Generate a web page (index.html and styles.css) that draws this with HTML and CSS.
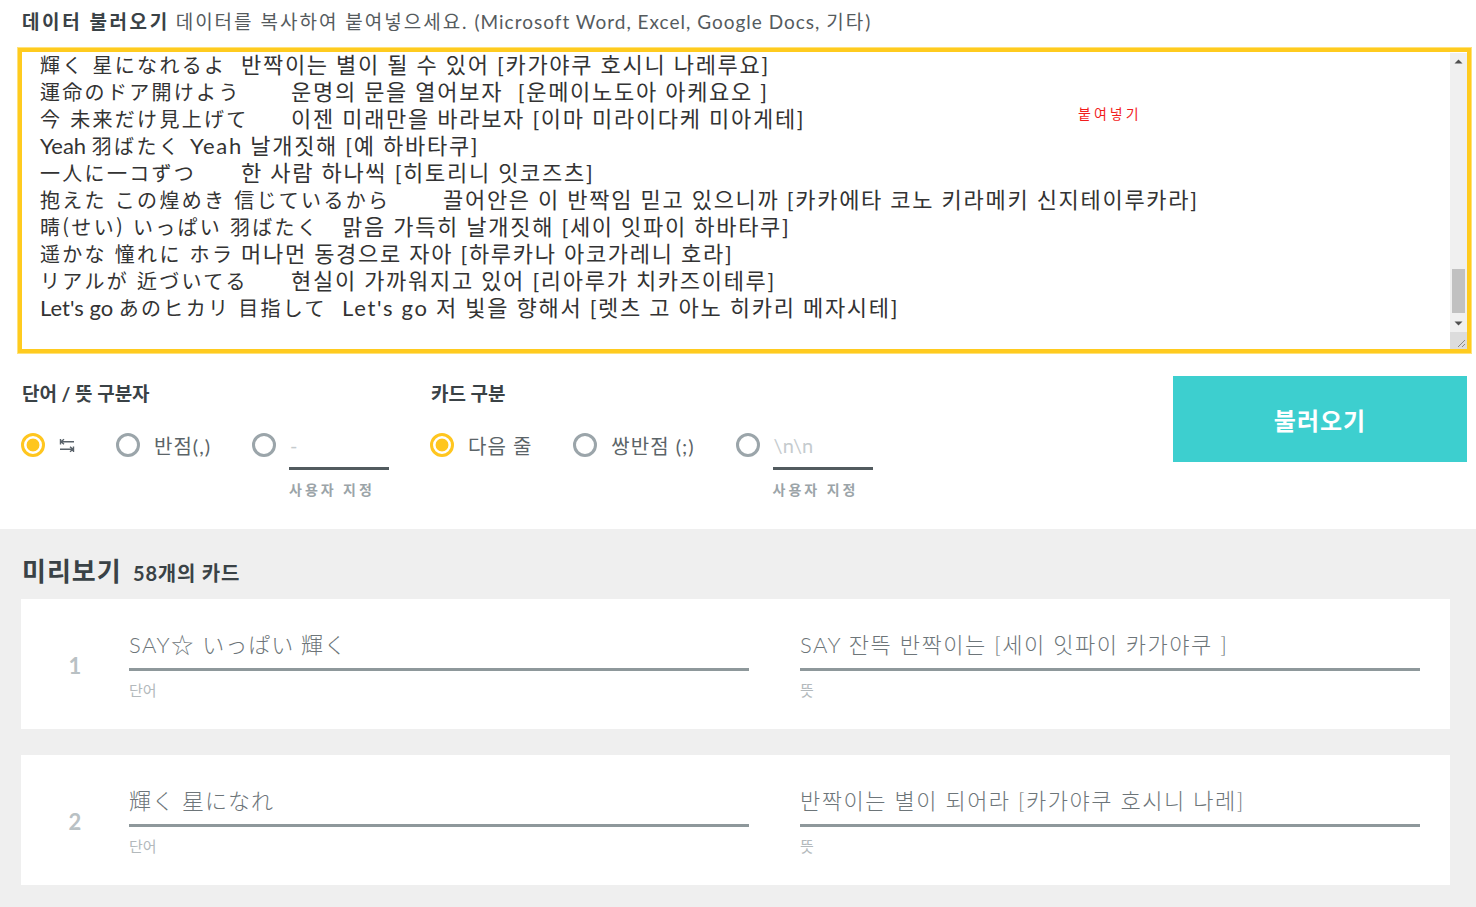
FILE: index.html
```html
<!DOCTYPE html>
<html lang="ko">
<head>
<meta charset="utf-8">
<title>데이터 불러오기</title>
<link rel="stylesheet" href="styles.css">
</head>
<body>
<section class="import">
  <p class="intro"><strong>데이터 불러오기</strong> <span class="ko">데이터를 복사하여 붙여넣으세요.</span> (Microsoft Word, Excel, Google Docs, <span class="ko">기타</span>)</p>
  <div class="paste">
    <div class="paste-text">
      <div class="paste-lines">
        <div class="ln"><span class="w t4"><span class="ja">輝く 星になれるよ</span></span>반짝이는 별이 될 수 있어 [카가야쿠 호시니 나레루요]</div>
        <div class="ln"><span class="w t5"><span class="ja">運命のドア開けよう</span></span>운명의 문을 열어보자&nbsp; [운메이노도아 아케요오 ]</div>
        <div class="ln"><span class="w t5"><span class="ja">今 未来だけ見上げて</span></span>이젠 미래만을 바라보자 [이마 미라이다케 미아게테]</div>
        <div class="ln"><span class="w t3">Yeah <span class="ja">羽ばたく</span></span>Yeah 날개짓해 [예 하바타쿠]</div>
        <div class="ln"><span class="w t4"><span class="ja">一人に一コずつ</span></span>한 사람 하나씩 [히토리니 잇코즈츠]</div>
        <div class="ln"><span class="w t8"><span class="ja">抱えた この煌めき 信じているから</span></span>끌어안은 이 반짝임 믿고 있으니까 [카카에타 코노 키라메키 신지테이루카라]</div>
        <div class="ln"><span class="w t6"><span class="ja">晴(せい) いっぱい 羽ばたく</span></span>맑음 가득히 날개짓해 [세이 잇파이 하바타쿠]</div>
        <div class="ln"><span class="w t4"><span class="ja">遥かな 憧れに ホラ</span></span>머나먼 동경으로 자아 [하루카나 아코가레니 호라]</div>
        <div class="ln"><span class="w t5"><span class="ja">リアルが 近づいてる</span></span>현실이 가까워지고 있어 [리아루가 치카즈이테루]</div>
        <div class="ln"><span class="w t6">Let's go <span class="ja">あのヒカリ 目指して</span></span>Let's go 저 빛을 향해서 [렛츠 고 아노 히카리 메자시테]</div>
      </div>
    </div>
    <span class="paste-hint">붙여넣기</span>
    <div class="scrollbar">
      <span class="sb-btn"><svg width="17" height="17" viewBox="0 0 17 17"><path d="M4.5 10.5 L8.5 6.5 L12.5 10.5 Z" fill="#505050"/></svg></span>
      <span class="sb-track"><span class="sb-thumb"></span></span>
      <span class="sb-btn"><svg width="17" height="17" viewBox="0 0 17 17"><path d="M4.5 6.5 L8.5 10.5 L12.5 6.5 Z" fill="#505050"/></svg></span>
      <span class="sb-corner"><svg width="17" height="17" viewBox="0 0 17 17"><path d="M15 8 L8 15 M15 12 L12 15" stroke="#888" stroke-width="1"/></svg></span>
    </div>
  </div>

  <div class="options">
    <div class="groups">
      <div class="group">
        <h3 class="group-title">단어 / 뜻 구분자</h3>
        <div class="choices">
          <div class="choice"><span class="radio on"></span>
            <svg class="tab-icon" width="16" height="15" viewBox="0 0 16 15"><path d="M1.5 1 V6.5 M2 3.7 H15 M2 3.7 L5 1.2 M2 3.7 L5 6.2 M14.5 8.5 V14 M1 11.2 H14 M14 11.2 L11 8.7 M14 11.2 L11 13.7" stroke="#59626a" stroke-width="1.4" fill="none"/></svg>
          </div>
          <div class="choice"><span class="radio"></span><span>반점(,)</span></div>
          <div class="choice custom"><span class="radio"></span>
            <div class="custom-field"><span class="custom-input">-</span><span class="custom-label">사용자 지정</span></div>
          </div>
        </div>
      </div>
      <div class="group">
        <h3 class="group-title">카드 구분</h3>
        <div class="choices">
          <div class="choice"><span class="radio on"></span><span>다음 줄</span></div>
          <div class="choice"><span class="radio"></span><span>쌍반점 (;)</span></div>
          <div class="choice custom"><span class="radio"></span>
            <div class="custom-field"><span class="custom-input">\n\n</span><span class="custom-label">사용자 지정</span></div>
          </div>
        </div>
      </div>
    </div>
    <button class="load" type="button">불러오기</button>
  </div>
</section>

<section class="preview">
  <h2 class="preview-title">미리보기 <small>58개의 카드</small></h2>
  <div class="cards">
    <div class="card">
      <span class="card-num">1</span>
      <div class="field"><div class="field-text">SAY☆ <span class="fja">いっぱい 輝く</span></div><div class="field-label">단어</div></div>
      <div class="field"><div class="field-text">SAY 잔뜩 반짝이는 [세이 잇파이 카가야쿠 ]</div><div class="field-label">뜻</div></div>
    </div>
    <div class="card">
      <span class="card-num">2</span>
      <div class="field"><div class="field-text"><span class="fja">輝く 星になれ</span></div><div class="field-label">단어</div></div>
      <div class="field"><div class="field-text">반짝이는 별이 되어라 [카가야쿠 호시니 나레]</div><div class="field-label">뜻</div></div>
    </div>
  </div>
</section>
</body>
</html>
```

FILE: styles.css
```css
body {
  margin: 0;
  font-family: Lato, "Noto Sans CJK KR", sans-serif;
  color: #333;
  background: #fff;
}

.import {
  padding: 10px 5px 0 18px;
}

.intro {
  margin: 0 0 0 4px;
  font-size: 19px;
  line-height: 24px;
  letter-spacing: 1px;
  color: #555b5e;
  white-space: nowrap;
}

.intro strong {
  color: #3a4246;
  font-weight: 700;
  letter-spacing: 2.6px;
}

.intro .ko {
  letter-spacing: 2px;
}

.paste {
  position: relative;
  margin-top: 14px;
  height: 305px;
  box-sizing: border-box;
  border: 4px solid #ffcb1f;
  box-shadow: 0 0 0 1px #ffe27a;
  display: flex;
}

.paste-text {
  flex: 1;
  overflow: hidden;
  padding-left: 18px;
}

.paste-lines {
  margin-top: -1px;
  font-size: 22px;
  line-height: 27px;
  letter-spacing: 1.7px;
  color: #333;
}

.ln {
  white-space: nowrap;
}

.w {
  display: inline-block;
  letter-spacing: 0;
}

.ja {
  font-family: "Noto Sans CJK JP", sans-serif;
  font-size: 20px;
  letter-spacing: 2.3px;
}

.t3 { width: 150px; }
.t4 { width: 201px; }
.t5 { width: 251px; }
.t6 { width: 302px; }
.t8 { width: 403px; }

.paste-hint {
  position: absolute;
  left: 1056px;
  top: 53px;
  font-size: 14px;
  line-height: 18px;
  letter-spacing: 3px;
  color: #f21c1c;
}

.scrollbar {
  width: 17px;
  background: #f0f0f0;
  display: flex;
  flex-direction: column;
  margin-top: 1px;
}

.sb-btn,
.sb-corner {
  display: block;
  height: 17px;
}

.sb-btn svg,
.sb-corner svg {
  display: block;
}

.sb-corner {
  background: #dcdcdc;
}

.sb-track {
  flex: 1;
  display: flex;
  flex-direction: column;
  justify-content: flex-end;
  padding-bottom: 2px;
}

.sb-thumb {
  display: block;
  height: 44px;
  margin: 0 2px;
  background: #c1c1c1;
}

.options {
  display: flex;
  justify-content: space-between;
  align-items: flex-start;
  margin-top: 23px;
  padding-left: 3px;
  height: 153px;
  box-sizing: border-box;
}

.groups {
  display: flex;
  gap: 41px;
}

.group-title {
  margin: 6px 0 0 1px;
  font-size: 19px;
  line-height: 24px;
  font-weight: 700;
  color: #3a4246;
}

.choices {
  display: flex;
  gap: 41px;
  align-items: flex-start;
  margin-top: 27px;
}

.choice {
  display: flex;
  align-items: center;
  gap: 14px;
  height: 24px;
  font-size: 20px;
  letter-spacing: 1px;
  color: #5b6468;
}

.choice.custom {
  align-items: flex-start;
  gap: 13px;
  height: auto;
}

.radio {
  display: block;
  width: 24px;
  height: 24px;
  box-sizing: border-box;
  border-radius: 50%;
  border: 3px solid #9ba5aa;
  background: #fff;
  flex: none;
}

.radio.on {
  border-color: #ffc61f;
  background: radial-gradient(circle, #ffc61f 0 6px, #fff 6.8px);
}

.tab-icon {
  display: block;
}

.custom-field {
  display: flex;
  flex-direction: column;
  width: 100px;
}

.custom-input {
  line-height: 24px;
  padding: 0 1px 10px;
  border-bottom: 3px solid #525b5f;
  color: #c5cbce;
  font-size: 20px;
  letter-spacing: 0;
}

.custom-label {
  margin-top: 11px;
  font-size: 14px;
  line-height: 18px;
  font-weight: 700;
  letter-spacing: 3px;
  color: #9ba4a8;
  white-space: nowrap;
}

.load {
  width: 294px;
  height: 86px;
  margin-right: 4px;
  border: 0;
  background: #3dcfcf;
  color: #fff;
  font-family: Lato, "Noto Sans CJK KR", sans-serif;
  font-size: 24px;
  font-weight: 700;
  letter-spacing: 1px;
}

.preview {
  background: #efefef;
  padding: 26px 26px 22px 21px;
}

.preview-title {
  margin: 0 0 10px 1px;
  font-size: 26px;
  line-height: 32px;
  font-weight: 700;
  letter-spacing: 1px;
  color: #3a4246;
}

.preview-title small {
  margin-left: 4px;
  font-size: 20px;
  letter-spacing: 0.8px;
}

.cards {
  display: flex;
  flex-direction: column;
  gap: 26px;
}

.card {
  display: flex;
  align-items: flex-start;
  height: 130px;
  box-sizing: border-box;
  padding-top: 32px;
  background: #fff;
}

.card-num {
  width: 108px;
  margin-top: 21px;
  text-align: center;
  font-size: 22px;
  line-height: 28px;
  font-weight: 700;
  color: #b9c1c4;
}

.field {
  width: 620px;
}

.field + .field {
  margin-left: 51px;
}

.field-text {
  font-size: 22px;
  line-height: 28px;
  font-weight: 300;
  letter-spacing: 1.5px;
  color: #6d7579;
  padding-bottom: 9px;
  border-bottom: 3px solid #8e989b;
  white-space: nowrap;
}

.fja {
  letter-spacing: 1px;
}

.field-label {
  margin-top: 10px;
  font-size: 15px;
  line-height: 18px;
  color: #b3b9bc;
}
```
